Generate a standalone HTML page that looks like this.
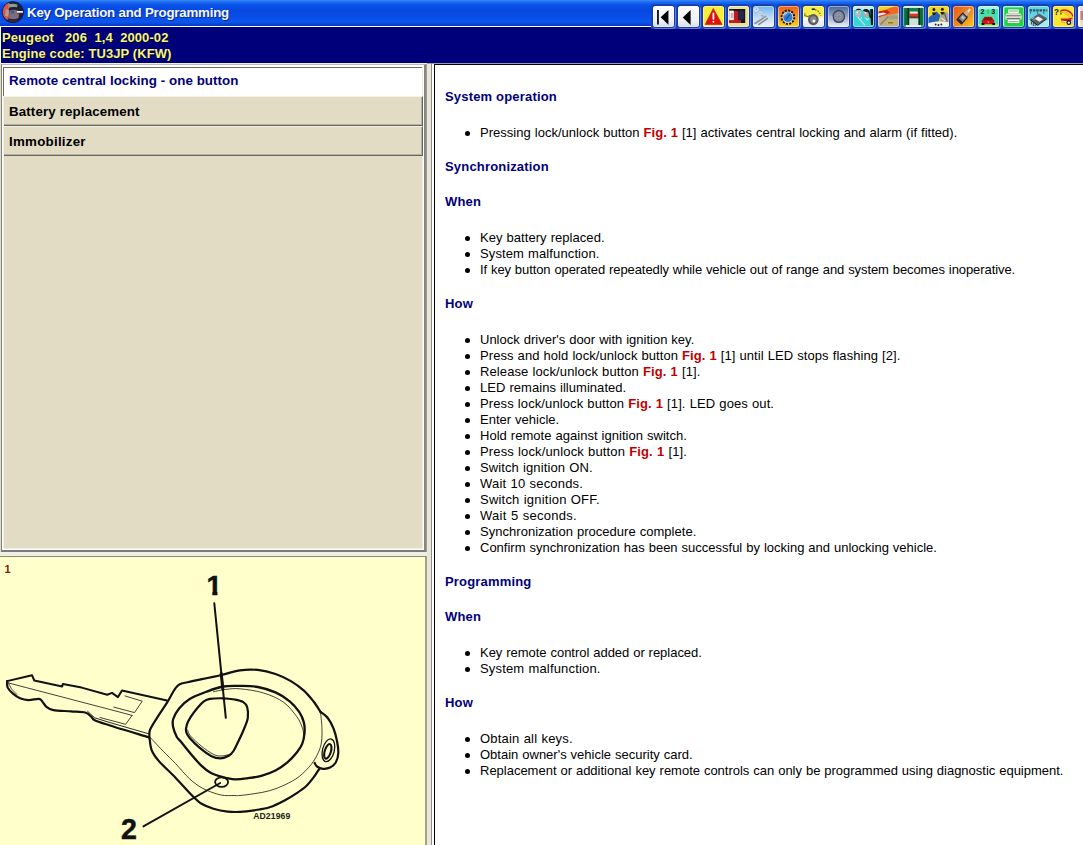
<!DOCTYPE html>
<html lang="en">
<head>
<meta charset="utf-8">
<title>Key Operation and Programming</title>
<style>
*{box-sizing:border-box;margin:0;padding:0}
html,body{width:1083px;height:845px;overflow:hidden;background:#ece9d8}
body{position:relative;font-family:"Liberation Sans",Arial,sans-serif;font-size:13px;color:#000}
#title{position:absolute;left:0;top:0;width:1083px;height:27px;
 background:linear-gradient(#3a8af4 0,#1d6cf2 2px,#0a52e8 5px,#0648de 11px,#0a50e8 18px,#0c56ee 22px,#0840cc 25px,#0838b8 26px)}
#title .line{position:absolute;left:0;top:26px;width:652px;height:1px;background:#fff}
#btnzone{position:absolute;left:651px;top:4px;width:432px;height:25px;z-index:3;background:linear-gradient(#0e54e8 0,#0a4ade 8px,#0c4ee2 15px,#0d46d0 20px,#1a44b8 25px)}
#title .cap{position:absolute;left:27px;top:5px;font-weight:bold;font-size:13.3px;letter-spacing:-.22px;line-height:16px;color:#f4f8ff;white-space:pre;
 text-shadow:1px 1px 0 #0a2a8a}
#appicon{position:absolute;left:0;top:0;width:26px;height:26px}
.tb{position:absolute;top:2px;width:21px;height:21px;border-radius:2.5px;overflow:hidden;box-shadow:0 0 0 1px #1b3a9c,1px 1px 0 1px #5a84e4,-1px -1px 0 1px #1446c0}
.tb svg{display:block;width:21px;height:21px}
.tb:after{content:"";position:absolute;left:0;top:0;right:0;bottom:0;border-radius:2.5px;box-shadow:inset 0 0 0 1px rgba(255,255,255,.42)}
#veh{position:absolute;left:0;top:27px;width:1083px;height:36px;background:#00007b;border-left:1px solid #fff}
#veh div{position:absolute;left:1px;letter-spacing:.09px;font-weight:bold;font-size:13px;line-height:16px;color:#f6f67a;white-space:pre;text-shadow:1px 1px 0 #000030}
#vehline{position:absolute;left:0;top:63px;width:1083px;height:1px;background:#9a9ab8}
/* left list */
#list{position:absolute;left:0;top:63px;width:427px;height:489px;background:#e2dcc5;border-top:1px solid #f2f0e6}
#list .ol{position:absolute;left:1px;top:0;width:425px;height:488px;border:1px solid #7f7f7f;border-top-color:#bdbbb0;border-right:2px solid #868680;border-bottom:2px solid #7a7a7a;box-shadow:1px 0 0 #a09e92}
#list .il{position:absolute;left:2px;top:1px;width:422px;height:485px;border:1px solid #fff;border-top-width:2px;box-shadow:0 0 0 1px #efece0 inset}
.item{position:absolute;left:4px;width:419px;height:30px;font-weight:bold;font-size:13.33px;line-height:16px;padding:6px 0 0 5px;white-space:pre;background:#e2dcc5;color:#000}
.item.sel{left:3px;width:419px;height:29px;background:#fff;color:#00007b;border-top:1px solid #6d6d62;border-left:1px solid #6d6d62;padding:5px 0 0 5px;letter-spacing:.06px}
.item.btn{border-top:1px solid #f3f0e4;border-bottom:1px solid #66665a;border-right:1px solid #66665a;width:419px;padding-top:7px;box-shadow:0 -1px 0 #b4b2a4 inset,-1px 0 0 #b4b2a4 inset}
/* splitters */
#hsplit{position:absolute;left:0;top:552px;width:427px;height:4px;background:#f0eee2}
#vsplit{position:absolute;left:427px;top:64px;width:4px;height:781px;background:#e9e7da}
/* image */
#fig{position:absolute;left:0;top:556px;width:427px;height:289px;background:#ffffcc;border-top:1px solid #8a8a78;border-right:2px solid #a3a186}
#fig svg{position:absolute;left:0;top:0}
/* right doc */
#doc{position:absolute;left:431px;top:63px;width:652px;height:782px;background:#fff;border-left:1px solid #8c8c8c}
#doc .bl{position:absolute;left:2px;top:1px;width:1px;height:781px;background:#000}
#doc .bt{position:absolute;left:2px;top:1px;width:650px;height:1px;background:#000}
#doc .ln{position:absolute;left:0;top:0;width:652px;height:1px;background:#9a9ab8}
.h{position:absolute;left:13px;font-weight:bold;font-size:13px;line-height:16px;color:#00007b;white-space:pre;letter-spacing:.18px}
.li{position:absolute;left:48px;margin-top:1px;word-spacing:.35px;font-size:13px;line-height:16px;white-space:pre}
.li:before{content:"";position:absolute;left:-15px;top:6px;width:5px;height:5px;border-radius:50%;background:#000}
.li b{color:#c00000}
</style>
</head>
<body>
<div id="title">
 <div class="line"></div>
 <svg id="appicon" viewBox="0 0 26 26"><defs><clipPath id="ac"><circle cx="12.900" cy="12.100" r="10.300"/></clipPath></defs><circle cx="12.900" cy="12.100" r="10.900" fill="#0b1350"/><g clip-path="url(#ac)"><rect x="2" y="1" width="22" height="23" fill="#1a2038"/><path d="M2 6c2-3 5-3.500 8-2.500l-1 6 .5 6-1.500 4.500C5 19 2.500 16 2 12z" fill="#d4574c"/><path d="M8.500 4.500c3-1 6-1 9 .300l-.500 2.500c-3-.600-6-.400-8.800.500z" fill="#8f9c8a"/><path d="M9.500 10.500c3-1.500 7-1 10 1l-1 6.500c-3 1.500-6.500 1.500-9.500.500z" fill="#7c6e7c"/><path d="M6 9c1.500 0 2.500 1 3 2.500l-1 5-3-.500z" fill="#b89a8c"/><circle cx="12.600" cy="12" r="1.700" fill="#3a5a9a"/><path d="M17 11h6v1.800h-6z" fill="#dfeee0"/><path d="M17.500 13.200h5v1h-5z" fill="#5a2030"/><path d="M9 19c3 1.500 6 1.500 9 0l-1 3c-2.500 1-5 1-7.500 0z" fill="#3a2440"/></g></svg>
 <div class="cap">Key Operation and Programming</div>
</div>
<div id="btnzone">
<!--ICONS-->
<svg width="0" height="0" style="position:absolute"><defs>
<linearGradient id="gw" x1="0" y1="0" x2="0" y2="1"><stop offset="0" stop-color="#fdfdff"/><stop offset=".7" stop-color="#eef1f8"/><stop offset="1" stop-color="#d4dcee"/></linearGradient>
<linearGradient id="gsky" x1="0" y1="0" x2="0" y2="1"><stop offset="0" stop-color="#6cb4f0"/><stop offset=".55" stop-color="#c2dcf4"/><stop offset="1" stop-color="#eef2fa"/></linearGradient>
<linearGradient id="gor" x1="0" y1="0" x2="0" y2="1"><stop offset="0" stop-color="#ee5e1c"/><stop offset=".5" stop-color="#f49a1c"/><stop offset="1" stop-color="#f8d424"/></linearGradient>
<linearGradient id="gor2" x1="0" y1="0" x2="1" y2="1"><stop offset="0" stop-color="#e6561e"/><stop offset=".55" stop-color="#f08a1e"/><stop offset="1" stop-color="#f8cc20"/></linearGradient>
<linearGradient id="gyw" x1="0" y1="0" x2="0" y2="1"><stop offset="0" stop-color="#f4f03a"/><stop offset=".45" stop-color="#f0ee54"/><stop offset=".6" stop-color="#f6f8ec"/><stop offset="1" stop-color="#dce8f6"/></linearGradient>
<linearGradient id="gst" x1="0" y1="0" x2="0" y2="1"><stop offset="0" stop-color="#44689c"/><stop offset=".5" stop-color="#98a8c8"/><stop offset="1" stop-color="#eef0f8"/></linearGradient>
</defs></svg>
<div class="tb" style="left:2px"><svg viewBox="0 0 22 21" preserveAspectRatio="none"><rect width="22" height="21" fill="url(#gw)"/><rect x="4.3" y="4" width="1.8" height="14.5" fill="#000"/><path d="M8 11.2L16.2 4v14.8z" fill="#000"/></svg></div>
<div class="tb" style="left:27px"><svg viewBox="0 0 22 21" preserveAspectRatio="none"><rect width="22" height="21" fill="url(#gw)"/><path d="M5 11.6L13.2 4v15z" fill="#000"/></svg></div>
<div class="tb" style="left:52px"><svg viewBox="0 0 22 21" preserveAspectRatio="none"><rect width="22" height="21" fill="#f6ee38"/><rect y="18.6" width="22" height="2.4" fill="#f4f0a0"/><path d="M10.8 2.4L20 18.6H2.2z" fill="#dc1410" stroke="#c01010" stroke-width=".6" stroke-linejoin="round"/><rect x="10" y="6.6" width="1.8" height="7.2" rx=".8" fill="#fff"/><rect x="10" y="14.8" width="1.8" height="2" rx=".8" fill="#fff"/></svg></div>
<div class="tb" style="left:77px"><svg viewBox="0 0 22 21" preserveAspectRatio="none"><rect width="22" height="21" fill="#e6e29a"/><rect x="1.2" y="3" width="16.8" height="14" fill="#1a1418"/><rect x="1.2" y="4.6" width="5" height="10" fill="#f4eef0"/><rect x="6.2" y="5" width="4.4" height="10" fill="#c01818"/><rect x="10.6" y="4.6" width="6" height="9" fill="#24284a"/><rect x="1.2" y="14.2" width="12.4" height="2.8" fill="#c81c1c"/><rect x="3" y="7" width="2" height="5" fill="#d8a0a8"/></svg></div>
<div class="tb" style="left:102px"><svg viewBox="0 0 22 21" preserveAspectRatio="none"><rect width="22" height="21" fill="url(#gsky)"/><path d="M2 17.5L13.5 10.5M6 18.5L15 12.5" stroke="#8a8f98" stroke-width="1.6" stroke-linecap="round"/><path d="M3 3.5l3.5 3 2 2.6 2.6 1.6" stroke="#a8b0bc" stroke-width="1.8" fill="none" stroke-linecap="round"/><circle cx="3.6" cy="3.4" r="1.7" fill="none" stroke="#e8eef4" stroke-width="1.1"/><circle cx="7.4" cy="7.4" r="1.5" fill="none" stroke="#dfe6ee" stroke-width="1"/><path d="M11 13.5l4.5-3.2" stroke="#d8dce2" stroke-width="1"/></svg></div>
<div class="tb" style="left:127px"><svg viewBox="0 0 22 21" preserveAspectRatio="none"><rect width="22" height="21" fill="url(#gor)"/><circle cx="10.4" cy="11.2" r="6.6" fill="none" stroke="#181818" stroke-width="2.2" stroke-dasharray="2.1 1.35"/><circle cx="10.4" cy="11.2" r="5.6" fill="#f0f0f0"/><circle cx="10.4" cy="11.2" r="4.9" fill="#2f7fd2"/><path d="M8 13.5l4.6-5" stroke="#1c50a0" stroke-width="1.3"/><path d="M6.8 9.4a4 4 0 0 1 3-2.6" stroke="#9fd0f4" stroke-width="1.2" fill="none"/></svg></div>
<div class="tb" style="left:152px"><svg viewBox="0 0 22 21" preserveAspectRatio="none"><rect width="22" height="21" fill="url(#gyw)"/><circle cx="10.8" cy="13.6" r="5.6" fill="#5c5c60"/><circle cx="10.8" cy="13.6" r="3.4" fill="#8c8c90"/><circle cx="11.4" cy="15" r="1.5" fill="#fff"/><path d="M2 9.5c2 1.6 4.4 1.2 5.6-.4M2.2 7.2l-.4 2.6 2.6.2" stroke="#7c7a08" stroke-width="1.1" fill="none"/><path d="M9.2 3.2h3.2" stroke="#111" stroke-width="1.6"/><path d="M12.6 3.6c3 .8 5.4 3.2 6 6" stroke="#6c6a08" stroke-width="1.1" fill="none" stroke-dasharray="1.6 1.2"/></svg></div>
<div class="tb" style="left:177px"><svg viewBox="0 0 22 21" preserveAspectRatio="none"><rect width="22" height="21" fill="url(#gst)"/><circle cx="11.3" cy="10.4" r="6.7" fill="#3c4662"/><circle cx="11.3" cy="10.4" r="5.2" fill="#8a90a0"/><circle cx="11.3" cy="10.4" r="2.4" fill="#a8aebb"/><path d="M11.3 5.4v10M6.3 10.4h10M7.8 6.9l7 7M14.8 6.9l-7 7" stroke="#767c8e" stroke-width=".7"/><ellipse cx="3.4" cy="12" rx="1.6" ry="2.2" fill="#b0b4c8"/></svg></div>
<div class="tb" style="left:202px"><svg viewBox="0 0 22 21" preserveAspectRatio="none"><rect width="22" height="21" fill="#36d6d6"/><rect width="22" height="4" fill="#bfeff0"/><ellipse cx="5.4" cy="7.4" rx="3.2" ry="4" fill="#b4b8bc"/><ellipse cx="13.6" cy="7.8" rx="3" ry="3.8" fill="#a8acb0"/><path d="M2.6 4.6c1-2.4 5-2.6 6.4-.4-2.2-.2-4.6-.2-6.400.4z" fill="#181818"/><path d="M10.400 4.400c1.600-2 5.200-2 6.800.6l2 7.200-1.800-.4-1.200-5.400c-2-.600-3.800-1-5.800-2z" fill="#181818"/><path d="M18 3h3v16h-2.200z" fill="#141414"/><path d="M5 11l2 2.600 2.400-2M13 11.600l1.800 2.400 2-1.600" stroke="#e8f4f4" stroke-width="1" fill="none"/><path d="M7.400 13.800l5.200 5.600" stroke="#d0d8d8" stroke-width="1.300"/><circle cx="4.400" cy="6.600" r="1" fill="#e8ecec"/><circle cx="13" cy="7" r="1" fill="#e0e4e4"/></svg></div>
<div class="tb" style="left:227px"><svg viewBox="0 0 22 21" preserveAspectRatio="none"><rect width="22" height="21" fill="#b9ab84"/><path d="M0 0h22v7L0 11z" fill="#ee6a1e"/><path d="M0 0h18L0 6.500z" fill="#f2d21c"/><path d="M0 5.500l9-1.500 4 2.500L0 11.500z" fill="#cc1c20"/><path d="M0 7.600l6-1 3 1.200-9 2.400z" fill="#f4ecec"/><path d="M22 7L9 11.500l-9 1V21h22z" fill="#bdb08a"/><path d="M2.500 18.500L11 10.500" stroke="#8c8468" stroke-width="1.600"/><rect x="9" y="15.400" width="8.500" height="3" rx="1.300" fill="#d4c428"/><rect x="10.500" y="16" width="5.500" height="1.600" fill="#8a7c40"/><path d="M11 10.500l5-1.500 5 1v3l-9.500.5z" fill="#a89c7c"/></svg></div>
<div class="tb" style="left:252px"><svg viewBox="0 0 22 21" preserveAspectRatio="none"><rect width="22" height="21" fill="#0f8450"/><rect width="22" height="2" fill="#c8ecd8"/><rect x="4.600" y="2" width="1.800" height="17" fill="#0a2c1c"/><rect x="16" y="2" width="1.800" height="17" fill="#0a2c1c"/><rect x="2" y="2.500" width="2.400" height="16" fill="#0b6a3e"/><rect x="18" y="2.500" width="2.400" height="16" fill="#0b6a3e"/><rect x="7" y="5.400" width="8.600" height="2.600" rx="1" fill="#f2e8dc"/><rect x="6.600" y="7.600" width="9.400" height="3" fill="#d43a30"/><rect x="7" y="10.600" width="8.600" height="1.600" fill="#7a2a24"/><rect x="6.600" y="12.400" width="9.400" height="6.800" fill="#cfe4d8"/><rect x="3" y="19" width="16" height="2" fill="#e4f0ea"/></svg></div>
<div class="tb" style="left:277px"><svg viewBox="0 0 22 21" preserveAspectRatio="none"><rect width="22" height="21" fill="#efd824"/><path d="M0 12L9 5.500l4 4L9 21H0z" fill="#2362b4"/><path d="M13 9.500l5-4 4 2.500V17l-9 1z" fill="#a8a498"/><path d="M0 17.500c6-2.500 15-2.500 22-1V21H0z" fill="#f0f0ec"/><circle cx="6.200" cy="3.400" r="1.500" fill="#161616"/><path d="M4.200 6.400h4l-1 2.600h-2z" fill="#161616"/><circle cx="15" cy="3.200" r="1.500" fill="#161616"/><path d="M13 6h4l-.8 2.400h-2.400z" fill="#161616"/><path d="M17 6.500l3.200 9" stroke="#6a6a62" stroke-width="1.400"/><circle cx="8" cy="18.600" r="1" fill="#222"/><circle cx="11" cy="19" r="1" fill="#222"/><circle cx="14" cy="18.600" r="1" fill="#222"/><path d="M14 12l4 3" stroke="#e8e8e0" stroke-width="1.200"/></svg></div>
<div class="tb" style="left:302px"><svg viewBox="0 0 22 21" preserveAspectRatio="none"><rect width="22" height="21" fill="url(#gor2)"/><g transform="rotate(42 10.500 11)"><rect x="7" y="7.500" width="7.600" height="10.500" rx="1" fill="#2a2a2c"/><rect x="8.200" y="9" width="5.200" height="6" fill="#8a8c90"/><rect x="9.200" y="10.200" width="3.200" height="2.400" fill="#c4c6c8"/><rect x="9" y="3" width="3.600" height="4.800" fill="#b8b4ac"/><rect x="9.800" y="0" width="2" height="3.400" fill="#e8e4dc"/></g></svg></div>
<div class="tb" style="left:327px"><svg viewBox="0 0 22 21" preserveAspectRatio="none"><rect width="22" height="21" fill="#46e2b2"/><rect width="22" height="3.400" fill="#a6f4ea"/><rect x="0" y="18.400" width="22" height="2.600" fill="#b4ee62"/><text x="2.600" y="8.400" font-family="Liberation Sans,Arial,sans-serif" font-weight="bold" font-size="7.400" fill="#0c0c0c">2</text><text x="14" y="8.400" font-family="Liberation Sans,Arial,sans-serif" font-weight="bold" font-size="7.400" fill="#0c0c0c">3</text><rect x="9.400" y="3.600" width="2.400" height="4" fill="#3cd048"/><path d="M4 18.200v-3.600l2.800-3.800h7.400l2.800 3.800v3.600z" fill="#cc1616"/><path d="M7.400 11.600l-1.800 2.600h10l-1.800-2.600z" fill="#8a0e0e"/><rect x="3.800" y="17" width="2.800" height="2" fill="#1c0808"/><rect x="15" y="17" width="2.800" height="2" fill="#1c0808"/><path d="M10 15.400l1.600 1.200" stroke="#f8c0c0" stroke-width=".9"/></svg></div>
<div class="tb" style="left:352px"><svg viewBox="0 0 22 21" preserveAspectRatio="none"><rect width="22" height="21" fill="#22d242"/><rect width="22" height="1.500" fill="#86f0d8"/><rect width="1.500" height="21" fill="#86f0d8"/><rect x="5.500" y="3.400" width="11" height="4" fill="#f4f4f0"/><rect x="6.500" y="4.600" width="9" height="1" fill="#9ea0a0"/><path d="M3.400 7.400h15.200l1 3.200v3H2.400v-3z" fill="#dcdcd8"/><rect x="3.400" y="9" width="15" height="1.300" fill="#8c8e8e"/><rect x="4" y="12" width="14" height="1.200" fill="#70726f"/><rect x="5" y="13.600" width="12" height="3.400" fill="#f6f6f2"/><rect x="6" y="15" width="10" height=".9" fill="#a4a6a4"/></svg></div>
<div class="tb" style="left:377px"><svg viewBox="0 0 22 21" preserveAspectRatio="none"><rect width="22" height="21" fill="#5cd6e8"/><rect x="0" y="14" width="22" height="7" fill="#a4ecf0"/><path d="M1.600 4.400h18.600" stroke="#3e5058" stroke-width="2.400" stroke-dasharray="2.600 .900"/><path d="M2.600 6.200v1.400M10 6.200v1.400M16.400 6.200v1.200" stroke="#3e5058" stroke-width="1.200"/><path d="M2.500 13l9-5.500 8 4.500-9.500 6.500z" fill="#5a5e64"/><path d="M2.500 13l7.500 5.500v1.500L2.500 14.600z" fill="#1c1c20"/><path d="M10 18.500l9.500-6.500v1.500L10 20z" fill="#303238"/><path d="M10.600 10.500l5 2.800-3.600 2.500-5-3z" fill="#eef2f4"/><path d="M4 12.800l2.600-1.600M5.600 14l2.600-1.600" stroke="#c0c4c8" stroke-width=".8"/><path d="M3.500 15.500v3M5.500 17v3M7.500 18.500v2" stroke="#222" stroke-width=".9"/></svg></div>
<div class="tb" style="left:402px"><svg viewBox="0 0 22 21" preserveAspectRatio="none"><rect width="22" height="21" fill="#f7e82e"/><text x="1" y="8.600" font-family="Liberation Sans,Arial,sans-serif" font-weight="bold" font-size="8.500" fill="#141414">?</text><rect x="7.600" y="6.400" width="1.400" height="2" fill="#3a3a14"/><path d="M7.500 5.400c5-3 11.500-.6 13.500 5.200" stroke="#d01c18" stroke-width="1.500" fill="none"/><path d="M8 6.200c4-1.800 9.500-.2 11.600 4.400l-3 1.400c-2-3-5-4.600-8.600-5.800z" fill="#f4c42c"/><path d="M8 12.600h8l4.500-1.200v3l-5 1.800H9z" fill="#cc1c18"/><path d="M8.500 15l7 1" stroke="#f4f0e8" stroke-width="1"/><circle cx="16.600" cy="16.600" r="2.500" fill="#18181c"/><circle cx="16.600" cy="16.600" r="1.200" fill="#f4f4f4"/><rect x="19" y="13" width="3" height="5.500" fill="#c8c4b4"/></svg></div>
<div class="tb" style="left:427px"><svg viewBox="0 0 22 21" preserveAspectRatio="none"><rect width="22" height="21" fill="#f0d8d0"/><rect x="0" y="0" width="2.500" height="21" fill="#fff4f0"/><rect x="2.500" y="5" width="3" height="9" fill="#b8847c"/></svg></div>
<!--/ICONS-->
</div>
<div id="veh">
 <div style="top:3px">Peugeot   206  1,4  2000-02</div>
 <div style="top:19px">Engine code: TU3JP (KFW)</div>
</div>
<div id="vehline"></div>

<div id="list">
 <div class="ol"></div><div class="il"></div>
 <div class="item sel" style="top:3px">Remote central locking - one button</div>
 <div class="item btn" style="top:32px;letter-spacing:.13px">Battery replacement</div>
 <div class="item btn" style="top:62px;letter-spacing:.25px">Immobilizer</div>
</div>
<div id="hsplit"></div>
<div id="vsplit"></div>

<div id="fig">
 <svg width="425" height="288" viewBox="0 556 425 288">
<g fill="none" stroke="#111" stroke-linecap="round">
<path d="M149.5 737.0C149.6 735.6 148.7 732.2 150.1 728.7C151.5 725.2 155.0 720.2 157.8 715.7C160.7 711.2 164.2 706.1 167.2 701.4C170.1 696.6 173.3 690.2 175.5 687.2C177.7 684.2 178.3 684.1 180.3 683.1C182.3 682.1 180.7 682.8 187.4 681.3C194.1 679.8 211.7 676.2 220.5 674.2C229.3 672.2 233.8 670.2 240.0 669.3C246.2 668.4 251.9 668.3 257.8 668.9C263.7 669.5 270.0 671.1 275.5 673.0C281.0 674.9 286.2 677.3 290.9 680.1C295.6 682.9 300.1 686.2 303.9 689.6C307.6 693.0 310.6 696.8 313.4 700.3C316.2 703.8 319.3 709.1 320.5 710.9" stroke-width="2.2"/>
<path d="M320.5 710.9C321.7 711.9 325.4 714.0 327.6 716.8C329.8 719.6 331.9 723.5 333.5 727.5C335.1 731.5 336.3 736.4 337.1 740.5C337.9 744.6 338.5 748.5 338.3 752.0C338.1 755.5 337.3 758.9 335.9 761.3C334.5 763.7 332.2 765.5 330.0 766.6C327.8 767.7 325.1 768.0 322.9 767.8C320.7 767.6 318.4 766.5 317.0 765.5C315.6 764.5 315.0 762.5 314.6 761.9" stroke-width="2.2"/>
<path d="M319.3 767.8C318.3 769.3 315.6 773.8 313.4 776.7C311.2 779.6 309.1 782.4 306.3 785.0C303.5 787.6 300.4 789.7 296.8 792.1C293.2 794.5 289.5 796.8 285.0 799.2C280.5 801.6 274.7 804.6 269.6 806.3C264.5 808.0 259.1 808.5 254.2 809.3C249.3 810.1 244.4 810.7 240.0 810.9C235.6 811.1 232.0 811.1 227.6 810.6C223.2 810.1 217.7 809.0 213.4 807.7C209.1 806.4 205.2 805.0 201.6 802.8C198.0 800.6 196.4 798.9 192.1 794.5C187.8 790.1 181.0 782.4 175.5 776.7C170.0 771.0 162.8 764.6 158.9 760.1C155.0 755.6 153.4 753.4 151.8 749.5C150.2 745.6 149.9 739.1 149.5 737.0" stroke-width="2.2"/>
<path d="M320.5 710.9C320.7 713.5 321.7 721.3 321.9 726.3C322.1 731.3 322.1 736.8 321.5 741.0C320.9 745.2 319.9 748.0 318.2 751.8C316.4 755.6 314.2 759.8 311.0 763.7C307.8 767.7 303.5 772.1 299.2 775.5C294.9 778.9 289.9 781.4 285.0 783.8C280.1 786.2 274.7 788.2 269.6 789.7C264.5 791.2 259.1 791.9 254.2 792.7C249.3 793.5 243.2 794.2 240.0 794.5C236.8 794.8 237.9 794.6 234.7 794.5C231.4 794.4 225.8 795.1 220.5 793.9C215.2 792.7 207.9 790.1 202.8 787.4C197.7 784.7 194.2 782.0 189.7 777.9C185.1 773.8 179.8 767.0 175.5 762.5C171.2 758.0 167.8 755.0 163.7 750.7C159.6 746.5 152.9 739.3 150.7 737.0" stroke-width="0.8"/>
<path d="M240.0 684.9C245.8 685.0 251.9 684.9 257.8 686.0C263.7 687.1 270.2 689.0 275.5 691.4C280.8 693.8 285.8 697.0 289.7 700.3C293.6 703.5 296.8 707.3 299.2 710.9C301.6 714.5 303.0 718.0 303.9 721.6C304.8 725.2 304.8 728.7 304.5 732.2C304.2 735.8 303.5 739.7 302.2 742.9C300.9 746.1 299.3 748.4 296.8 751.5C294.3 754.6 290.9 758.3 287.4 761.3C283.8 764.3 279.9 767.3 275.5 769.6C271.1 771.9 266.0 773.6 261.3 774.9C256.6 776.2 251.5 776.7 247.1 777.3C242.7 777.9 238.7 778.5 234.7 778.3C230.7 778.1 226.8 777.1 222.9 776.1C219.0 775.1 214.6 773.9 211.0 772.0C207.4 770.1 204.9 768.1 201.6 764.9C198.2 761.7 194.4 757.1 190.9 753.0C187.4 748.9 182.7 742.9 180.3 740.0C177.9 737.1 177.9 738.1 176.7 735.8C175.5 733.5 173.8 729.3 173.2 726.3C172.6 723.3 172.2 721.1 173.2 718.0C174.2 714.9 176.3 710.8 179.1 707.4C181.8 704.0 185.2 700.7 189.7 697.9C194.2 695.1 200.8 692.9 206.3 690.8C211.8 688.7 217.3 686.5 222.9 685.5C228.5 684.5 234.2 684.8 240.0 684.9Z" stroke-width="2.3"/>
<path d="M213.4 690.8C215.5 690.4 221.6 688.9 226.0 688.4C230.4 687.9 233.7 687.2 240.0 687.8C246.3 688.4 256.4 689.7 263.7 692.0C271.0 694.3 278.3 697.4 283.8 701.4C289.3 705.4 293.7 711.6 296.8 715.7C299.9 719.9 301.0 723.2 302.2 726.3C303.4 729.3 303.5 732.7 303.8 734.0" stroke-width="0.8"/>
<path d="M209.9 697.9C213.1 697.4 218.8 697.2 222.9 697.3C227.0 697.4 231.3 697.9 234.7 698.5C238.0 699.1 240.9 699.6 243.0 700.9C245.1 702.2 246.4 703.6 247.2 706.2C248.0 708.9 248.3 713.2 247.8 716.8C247.3 720.3 245.8 723.5 244.2 727.5C242.6 731.5 240.1 736.8 238.3 740.5C236.5 744.2 235.1 747.6 233.5 750.0C231.9 752.4 231.0 753.5 228.8 754.7C226.6 755.9 223.5 757.3 220.5 757.3C217.5 757.3 214.6 756.7 211.0 754.9C207.4 753.1 202.8 749.4 199.2 746.4C195.6 743.4 191.9 739.6 189.7 737.0C187.5 734.4 186.7 733.2 186.2 731.0C185.7 728.8 186.0 726.4 186.8 723.9C187.6 721.4 189.0 718.7 190.9 715.7C192.8 712.8 195.8 708.8 198.0 706.2C200.2 703.6 201.9 701.7 203.9 700.3C205.9 698.9 206.7 698.4 209.9 697.9Z" stroke-width="2.2"/>
<path d="M187.6 729.0C188.1 730.0 188.2 732.3 190.5 735.0C192.8 737.7 197.8 742.2 201.6 745.3C205.4 748.3 210.2 751.7 213.4 753.3C216.6 754.9 218.2 755.0 221.0 755.0C223.8 755.0 228.5 753.6 230.0 753.3" stroke-width="0.8"/>
<ellipse cx="328.4" cy="749.3" rx="5.9" ry="11.6" transform="rotate(14 328.4 749.3)" stroke-width="1.3"/>
<ellipse cx="327.8" cy="750.4" rx="3.1" ry="7.6" transform="rotate(17 327.8 750.4)" stroke-width="2.1"/>
<ellipse cx="221.6" cy="781.1" rx="6.5" ry="4.7" stroke-width="1.8"/>
<path d="M7.1 680.1L32.0 674.2L34.3 679.5L62.2 685.5L62.8 683.1L81.7 686.6L107.2 693.7L112.0 691.9L117.9 696.1L122.0 689.5L167.0 699.6" stroke-width="2.0" stroke-linejoin="round"/>
<path d="M7.1 680.1C7.2 681.2 6.7 684.5 7.7 686.6C8.7 688.7 10.9 690.8 13.0 692.6C15.1 694.4 17.5 696.2 20.1 697.3C22.7 698.4 25.2 699.0 28.4 699.1C31.6 699.2 36.7 697.6 39.1 697.9C41.5 698.2 41.4 699.6 42.6 700.9C43.8 702.2 44.4 704.2 46.2 705.6C48.0 707.0 49.2 708.3 53.3 709.1C57.4 709.9 65.7 709.9 71.0 710.3C76.3 710.7 81.9 710.6 85.3 711.5C88.7 712.4 89.6 714.4 91.2 715.7C92.8 717.0 91.6 717.7 94.7 719.2C97.8 720.7 101.0 721.6 110.0 724.5C119.0 727.4 142.2 734.3 148.7 736.3" stroke-width="2.2"/>
<path d="M8.3 681.9L110.0 708.5L132.1 714.4" stroke-width="0.8"/>
<path d="M8.5 682.0L11.5 688.0L17.0 693.5" stroke-width="0.7"/>
<path d="M87.6 710.3L94.7 716.8L110.0 721.6L148.7 732.8" stroke-width="0.9"/>
<path d="M125.0 694.9L142.2 700.2L134.5 711.6L113.7 706.1" stroke-width="0.8"/>
<path d="M132.1 714.4L125.6 723.3L100.0 716.5" stroke-width="0.8"/>
<path d="M214.3 602.3L225.8 716.8" stroke-width="2.0"/>
<path d="M221.2 672.5L222.8 688.0" stroke-width="3.0"/>
<path d="M143.4 825.4L220.2 782.0" stroke-width="1.9"/>
</g>
<text x="206.5" y="594.4" font-family="Liberation Sans,Arial,sans-serif" font-weight="bold" font-size="27.6" fill="#111" stroke="#111" stroke-width=".5">1</text>
<path d="M206 590.600h6.300v6h-6.300zM217.500 590.600h5.500v6h-5.500z" fill="#ffffcc"/>
<text x="121" y="838.4" font-family="Liberation Sans,Arial,sans-serif" font-weight="bold" font-size="28.6" fill="#111" stroke="#111" stroke-width=".5">2</text>
<text x="253.2" y="818.4" font-family="Liberation Sans,Arial,sans-serif" font-weight="bold" font-size="8.6" letter-spacing="0.12" fill="#222">AD21969</text>
<text x="4.4" y="571.6" font-family="Liberation Sans,Arial,sans-serif" font-weight="bold" font-size="11" fill="#8b1a00">1</text>
</svg>
</div>

<div id="doc">
 <div class="ln"></div><div class="bt"></div><div class="bl"></div>
 <div class="h" style="top:26px">System operation</div>
 <div class="li" style="top:61px;letter-spacing:0.023px">Pressing lock/unlock button <b>Fig. 1</b> [1] activates central locking and alarm (if fitted).</div>
 <div class="h" style="top:96px">Synchronization</div>
 <div class="h" style="top:131px">When</div>
 <div class="li" style="top:166px;letter-spacing:0.050px">Key battery replaced.</div>
 <div class="li" style="top:182px;letter-spacing:0.111px">System malfunction.</div>
 <div class="li" style="top:198px;letter-spacing:-0.077px">If key button operated repeatedly while vehicle out of range and system becomes inoperative.</div>
 <div class="h" style="top:233px">How</div>
 <div class="li" style="top:268px;letter-spacing:0.000px">Unlock driver's door with ignition key.</div>
 <div class="li" style="top:284px;letter-spacing:0.068px">Press and hold lock/unlock button <b>Fig. 1</b> [1] until LED stops flashing [2].</div>
 <div class="li" style="top:300px;letter-spacing:0.108px">Release lock/unlock button <b>Fig. 1</b> [1].</div>
 <div class="li" style="top:316px;letter-spacing:0.043px">LED remains illuminated.</div>
 <div class="li" style="top:332px;letter-spacing:0.102px">Press lock/unlock button <b>Fig. 1</b> [1]. LED goes out.</div>
 <div class="li" style="top:348px;letter-spacing:0.000px">Enter vehicle.</div>
 <div class="li" style="top:364px;letter-spacing:0.029px">Hold remote against ignition switch.</div>
 <div class="li" style="top:380px;letter-spacing:0.143px">Press lock/unlock button <b>Fig. 1</b> [1].</div>
 <div class="li" style="top:396px;letter-spacing:0.111px">Switch ignition ON.</div>
 <div class="li" style="top:412px;letter-spacing:0.200px">Wait 10 seconds.</div>
 <div class="li" style="top:428px;letter-spacing:0.211px">Switch ignition OFF.</div>
 <div class="li" style="top:444px;letter-spacing:0.286px">Wait 5 seconds.</div>
 <div class="li" style="top:460px;letter-spacing:0.029px">Synchronization procedure complete.</div>
 <div class="li" style="top:476px;letter-spacing:0.000px">Confirm synchronization has been successful by locking and unlocking vehicle.</div>
 <div class="h" style="top:511px">Programming</div>
 <div class="h" style="top:546px">When</div>
 <div class="li" style="top:581px;letter-spacing:-0.028px">Key remote control added or replaced.</div>
 <div class="li" style="top:597px;letter-spacing:0.167px">System malfunction.</div>
 <div class="h" style="top:632px">How</div>
 <div class="li" style="top:667px;letter-spacing:0.200px">Obtain all keys.</div>
 <div class="li" style="top:683px;letter-spacing:0.000px">Obtain owner's vehicle security card.</div>
 <div class="li" style="top:699px;letter-spacing:-0.011px">Replacement or additional key remote controls can only be programmed using diagnostic equipment.</div>
</div>
</body>
</html>
